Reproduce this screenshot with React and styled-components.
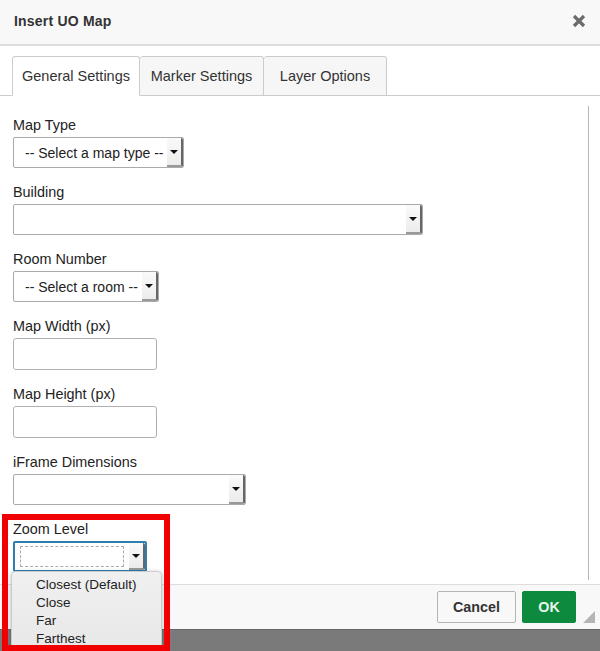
import styled, { createGlobalStyle } from 'styled-components'

const GlobalStyle = createGlobalStyle`
  html, body {
    margin: 0;
    padding: 0;
    background: #fff;
    overflow: hidden;
  }
  * {
    box-sizing: border-box;
  }
`

const Dialog = styled.div`
  position: relative;
  width: 600px;
  height: 651px;
  display: flex;
  flex-direction: column;
  overflow: hidden;
  background: #fff;
  color: #222;
  font-family: "Liberation Sans", Arial, sans-serif;
  font-size: 14px;
`

const Header = styled.header`
  height: 46px;
  flex: none;
  display: flex;
  align-items: center;
  justify-content: space-between;
  padding: 0 14px 2px;
  background: #f8f8f8;
  border-bottom: 2px solid #ddd;
`

const Title = styled.h1`
  margin: 0;
  font-size: 14px;
  font-weight: 700;
  letter-spacing: 0.2px;
  color: #333;
`

const CloseIcon = styled.svg`
  width: 14px;
  height: 14px;
  stroke: #6b6b6b;
  stroke-width: 3.2;
  fill: none;
`

const TabBar = styled.nav`
  flex: none;
  height: 50px;
  display: flex;
  align-items: flex-end;
  padding: 10px 0 0 12px;
  border-bottom: 1px solid #ccc;
`

const Tab = styled.div`
  height: 40px;
  width: ${(p) => p.$width}px;
  margin-bottom: -1px;
  display: flex;
  align-items: center;
  justify-content: center;
  background: ${(p) => (p.$active ? '#fff' : '#f6f6f6')};
  border: 1px solid #ccc;
  border-left-width: ${(p) => (p.$active ? 1 : 0)}px;
  border-bottom-color: ${(p) => (p.$active ? '#fff' : '#ccc')};
  border-radius: 3px 3px 0 0;
  font-size: 14.5px;
  color: #333;
`

const Form = styled.form`
  flex: 1;
  min-height: 0;
  margin: 10px 11px 4px 0;
  padding: 10px 0 0 13px;
  border-right: 1px solid #b5b5b5;
`

const Field = styled.div`
  height: ${(p) => p.$height || 67}px;
`

const Label = styled.label`
  display: block;
  height: 21px;
  line-height: 18px;
  font-size: 14.4px;
  color: #222;
`

const Select = styled.div`
  position: relative;
  width: ${(p) => p.$width}px;
  height: 31px;
  display: flex;
  align-items: center;
  padding-left: 11px;
  background: #fff;
  border: 1px solid #aaa;
  border-radius: 2px;
  font-size: 14px;
  color: #222;
  white-space: nowrap;
`

const Arrow = styled.span`
  position: absolute;
  top: 0;
  right: 0;
  bottom: 0;
  width: 16px;
  display: flex;
  align-items: center;
  justify-content: center;
  background: linear-gradient(#fafafa, #ececec);
  border-right: 2px solid #666;
  border-bottom: 2px solid #999;
  border-radius: 0 2px 2px 0;

  &::after {
    content: '';
    border-left: 4px solid transparent;
    border-right: 4px solid transparent;
    border-top: 4px solid #111;
  }
`

const Input = styled.input`
  display: block;
  width: 144px;
  height: 32px;
  padding: 0 6px;
  background: #fff;
  border: 1px solid #b0b0b0;
  border-radius: 3px;
  outline: none;
`

const FocusedSelect = styled.div`
  position: relative;
  width: 134px;
  height: 31px;
  display: flex;
  align-items: center;
  padding-left: 5px;
  background: #fff;
  border: 2px solid #2d7fb0;
  border-radius: 2px;
`

const DashedBox = styled.span`
  width: 104px;
  height: 21px;
  border: 1px dashed #aaa;
`

const Footer = styled.footer`
  flex: none;
  height: 45px;
  display: flex;
  align-items: flex-start;
  justify-content: flex-end;
  gap: 6px;
  padding: 6px 24px 0 0;
  background: #f8f8f8;
  border-top: 1px solid #ddd;
`

const Button = styled.button`
  height: 32px;
  width: ${(p) => p.$width}px;
  padding: 0;
  font-family: inherit;
  font-size: 14.3px;
  font-weight: 700;
  border-radius: 2px;
  color: ${(p) => (p.$primary ? '#e8f5ec' : '#333')};
  background: ${(p) => (p.$primary ? '#0d8a3e' : '#f8f8f8')};
  border: 1px solid ${(p) => (p.$primary ? '#0d8a3e' : '#b5b5b5')};
`

const ResizeGrip = styled.svg`
  position: absolute;
  right: 5px;
  bottom: 28px;
  width: 12px;
  height: 12px;
  fill: #b5b5b5;
`

const Backdrop = styled.div`
  flex: none;
  height: 22px;
  background: #7a7a7a;
  border-top: 1px solid #666;
`

const Dropdown = styled.ul`
  position: absolute;
  left: 11px;
  top: 571px;
  width: 151px;
  height: 76px;
  margin: 0;
  padding: 4px 0 0 24px;
  list-style: none;
  overflow: hidden;
  background: linear-gradient(#f0f0f0, #e8e8e8);
  border: 1px solid #ccc;
  border-radius: 4px 4px 0 0;
  box-shadow: 0 1px 4px rgba(0, 0, 0, 0.25);
`

const Option = styled.li`
  height: 18px;
  line-height: 18px;
  font-size: 13.5px;
  color: #222;
`

const Highlight = styled.div`
  position: absolute;
  left: 2px;
  top: 514px;
  width: 168px;
  height: 137px;
  border: 6px solid #f00000;
  pointer-events: none;
`

export default function App() {
  return (
    <>
      <GlobalStyle />
      <Dialog>
        <Header>
          <Title>Insert UO Map</Title>
          <CloseIcon viewBox="0 0 14 14">
            <path d="M2 2 L12 12 M12 2 L2 12" />
          </CloseIcon>
        </Header>
        <TabBar>
          <Tab $active $width={128}>General Settings</Tab>
          <Tab $width={124}>Marker Settings</Tab>
          <Tab $width={123}>Layer Options</Tab>
        </TabBar>
        <Form>
          <Field>
            <Label>Map Type</Label>
            <Select $width={171}>-- Select a map type --<Arrow /></Select>
          </Field>
          <Field>
            <Label>Building</Label>
            <Select $width={410}><Arrow /></Select>
          </Field>
          <Field>
            <Label>Room Number</Label>
            <Select $width={146}>-- Select a room --<Arrow /></Select>
          </Field>
          <Field $height={68}>
            <Label>Map Width (px)</Label>
            <Input />
          </Field>
          <Field $height={68}>
            <Label>Map Height (px)</Label>
            <Input />
          </Field>
          <Field>
            <Label>iFrame Dimensions</Label>
            <Select $width={233}><Arrow /></Select>
          </Field>
          <Field>
            <Label>Zoom Level</Label>
            <FocusedSelect><DashedBox /><Arrow /></FocusedSelect>
          </Field>
        </Form>
        <Footer>
          <Button $width={79}>Cancel</Button>
          <Button $primary $width={54}>OK</Button>
        </Footer>
        <ResizeGrip viewBox="0 0 12 12">
          <path d="M12 0 V12 H0 Z" />
        </ResizeGrip>
        <Backdrop />
        <Dropdown>
          <Option>Closest (Default)</Option>
          <Option>Close</Option>
          <Option>Far</Option>
          <Option>Farthest</Option>
        </Dropdown>
        <Highlight />
      </Dialog>
    </>
  )
}
